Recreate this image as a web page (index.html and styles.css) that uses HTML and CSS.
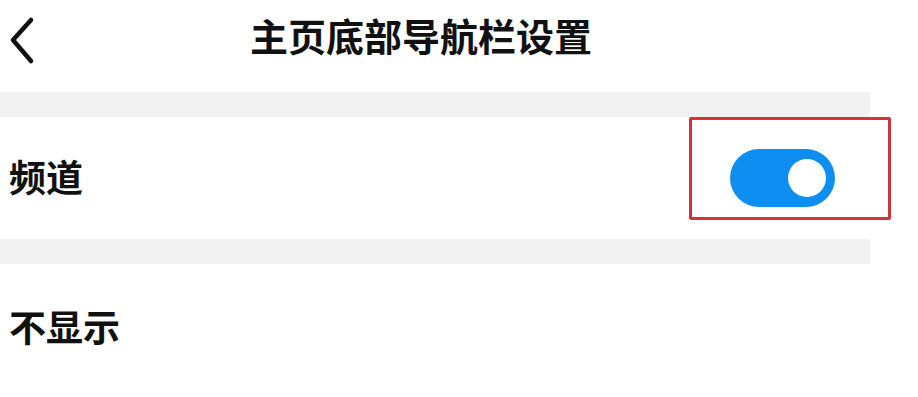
FILE: index.html
```html
<!DOCTYPE html>
<html lang="zh">
<head>
<meta charset="utf-8">
<title>主页底部导航栏设置</title>
<link rel="stylesheet" href="styles.css">
</head>
<body>
<div class="page">
  <header class="header">
    <svg class="back" width="40" height="60" viewBox="0 0 40 60" aria-hidden="true">
      <path d="M31 8 L13 28 L31 49" fill="none" stroke="#111" stroke-width="4.5" stroke-linecap="round" stroke-linejoin="round"/>
    </svg>
    <h1 class="title">主页底部导航栏设置</h1>
  </header>
  <div class="band"></div>
  <div class="row row-channel">
    <span class="label">频道</span>
    <div class="toggle"><div class="knob"></div></div>
    <div class="highlight"></div>
  </div>
  <div class="band"></div>
  <div class="row row-hidden">
    <span class="label">不显示</span>
  </div>
</div>
</body>
</html>
```
FILE: styles.css
```css
html, body {
  margin: 0;
  padding: 0;
  background: #ffffff;
}
body {
  font-family: "Noto Sans CJK SC", "Noto Sans", sans-serif;
  color: #111111;
  width: 918px;
  height: 397px;
  overflow: hidden;
}
.page {
  width: 870px;
}
.header {
  height: 92px;
  display: flex;
  align-items: center;
}
.back {
  display: block;
  flex: none;
  margin-top: -8px;
}
.title {
  margin: -22px 0 0 210px;
  font-size: 38px;
  font-weight: 700;
  line-height: 1;
}
.band {
  height: 25px;
  background: #f2f2f2;
}
.row {
  position: relative;
  display: flex;
  align-items: center;
  justify-content: space-between;
  padding-left: 9px;
}
.row-channel {
  height: 122px;
  padding-right: 35px;
}
.row-hidden {
  height: 128px;
}
.label {
  font-size: 37px;
  font-weight: 700;
  line-height: 1;
  margin-top: -3px;
}
.toggle {
  width: 105px;
  height: 58px;
  border-radius: 29px;
  background: #0f8ef2;
  display: flex;
  align-items: center;
  justify-content: flex-end;
  padding-right: 9px;
  box-sizing: border-box;
}
.knob {
  width: 38px;
  height: 38px;
  border-radius: 50%;
  background: #ffffff;
}
.highlight {
  position: absolute;
  left: 689px;
  top: 0;
  width: 202px;
  height: 103px;
  box-sizing: border-box;
  border: 3px solid #d1353a;
  border-radius: 2px;
}
```
